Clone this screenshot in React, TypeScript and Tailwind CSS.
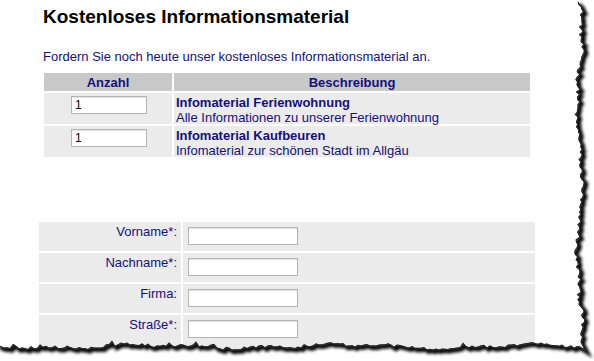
import React from "react";

const font = { fontFamily: '"Liberation Sans", Arial, sans-serif' };

function rng(seed: number) {
  let s = seed;
  return () => {
    s = (s * 1664525 + 1013904223) % 4294967296;
    return s / 4294967296;
  };
}

function tornEdge() {
  const r = rng(12345);
  const pts: [number, number][] = [];
  for (let y = 2; y <= 344; y += 2.5) {
    const wave = Math.sin(y / 23) * 2.5 + Math.sin(y / 7) * 1;
    pts.push([579 + wave + (r() - 0.5) * 4, y]);
  }
  pts.push([584, 349]);
  for (let x = 580; x >= -2; x -= 3) {
    const wave = Math.sin(x / 31) * 1.5 + Math.sin(x / 11) * 1;
    const spike = r() > 0.8 ? -4 * r() : 0;
    pts.push([x, 346 + wave + (r() - 0.5) * 3 + spike]);
  }
  const line = pts.map((p, i) => `${i ? "L" : "M"}${p[0].toFixed(1)},${p[1].toFixed(1)}`).join(" ");
  const outside = `M594,0 L${pts[0][0].toFixed(1)},0 ${line.replace(/^M/, "L")} L-2,361 L594,361 Z`;
  return { line, outside };
}

function TornPaper() {
  const { line, outside } = tornEdge();
  return (
    <svg className="absolute inset-0 pointer-events-none" width="594" height="361" viewBox="0 0 594 361">
      <defs>
        <filter id="blur" x="-10%" y="-10%" width="120%" height="120%">
          <feGaussianBlur stdDeviation="1.8" />
        </filter>
        <clipPath id="out">
          <path d={outside} />
        </clipPath>
      </defs>
      <path d={outside} fill="#ffffff" />
      <g clipPath="url(#out)">
        <path d={line} fill="none" stroke="#000" strokeWidth="5" filter="url(#blur)" transform="translate(2,2)" />
        <path d={line} fill="none" stroke="#2a2a2a" strokeWidth="2.5" />
      </g>
    </svg>
  );
}

function SmallInput({ value, w }: { value?: string; w: string }) {
  return (
    <input
      defaultValue={value}
      className={`${w} h-[18px] bg-white border border-[#b4b4b4] shadow-[inset_0_1px_1px_rgba(0,0,0,0.12)] px-[3px] text-[12px] text-black outline-none`}
      style={font}
    />
  );
}

const products = [
  { title: "Infomaterial Ferienwohnung", desc: "Alle Informationen zu unserer Ferienwohnung" },
  { title: "Infomaterial Kaufbeuren", desc: "Infomaterial zur schönen Stadt im Allgäu" },
];

const fields = ["Vorname*:", "Nachname*:", "Firma:", "Straße*:"];

export default function App() {
  return (
    <div className="relative w-[594px] h-[361px] overflow-hidden bg-white" style={font}>
      <div className="pl-[43px] pt-[6px]">
        <h1 className="text-[19px] leading-[22px] font-bold text-black">Kostenloses Informationsmaterial</h1>
        <p className="mt-[21px] text-[13px] leading-[15px] text-[#14107a]">
          Fordern Sie noch heute unser kostenloses Informationsmaterial an.
        </p>

        <div className="mt-[9px] ml-[1px] w-[486px] grid grid-cols-[128px_1fr] gap-[2px] text-[13px] leading-[15px] text-[#14107a]">
          <div className="bg-[#c9c9c9] h-[18px] font-bold text-center pt-[2px]">Anzahl</div>
          <div className="bg-[#c9c9c9] h-[18px] font-bold text-center pt-[2px]">Beschreibung</div>
          {products.map((p) => (
            <React.Fragment key={p.title}>
              <div className="bg-[#ebebeb] h-[31px] flex justify-center pt-[3px] pl-[2px]">
                <SmallInput value="1" w="w-[76px]" />
              </div>
              <div className="bg-[#ebebeb] h-[31px] px-[2px] pt-[2px]">
                <div className="font-bold">{p.title}</div>
                <div>{p.desc}</div>
              </div>
            </React.Fragment>
          ))}
        </div>
      </div>

      <div className="mt-[65px] ml-[39px] w-[496px] grid grid-cols-[142px_1fr] gap-[2px] text-[13px] leading-[15px] text-[#14107a]">
        {fields.map((f, i) => (
          <React.Fragment key={f}>
            <div className={`bg-[#ebebeb] ${i === 3 ? "h-[34px]" : "h-[29px]"} text-right pr-[4px] pt-[2px]`}>{f}</div>
            <div className={`bg-[#ebebeb] ${i === 3 ? "h-[34px]" : "h-[29px]"} pl-[5px] pt-[5px]`}>
              <SmallInput w="w-[110px]" />
            </div>
          </React.Fragment>
        ))}
      </div>

      <TornPaper />
    </div>
  );
}
